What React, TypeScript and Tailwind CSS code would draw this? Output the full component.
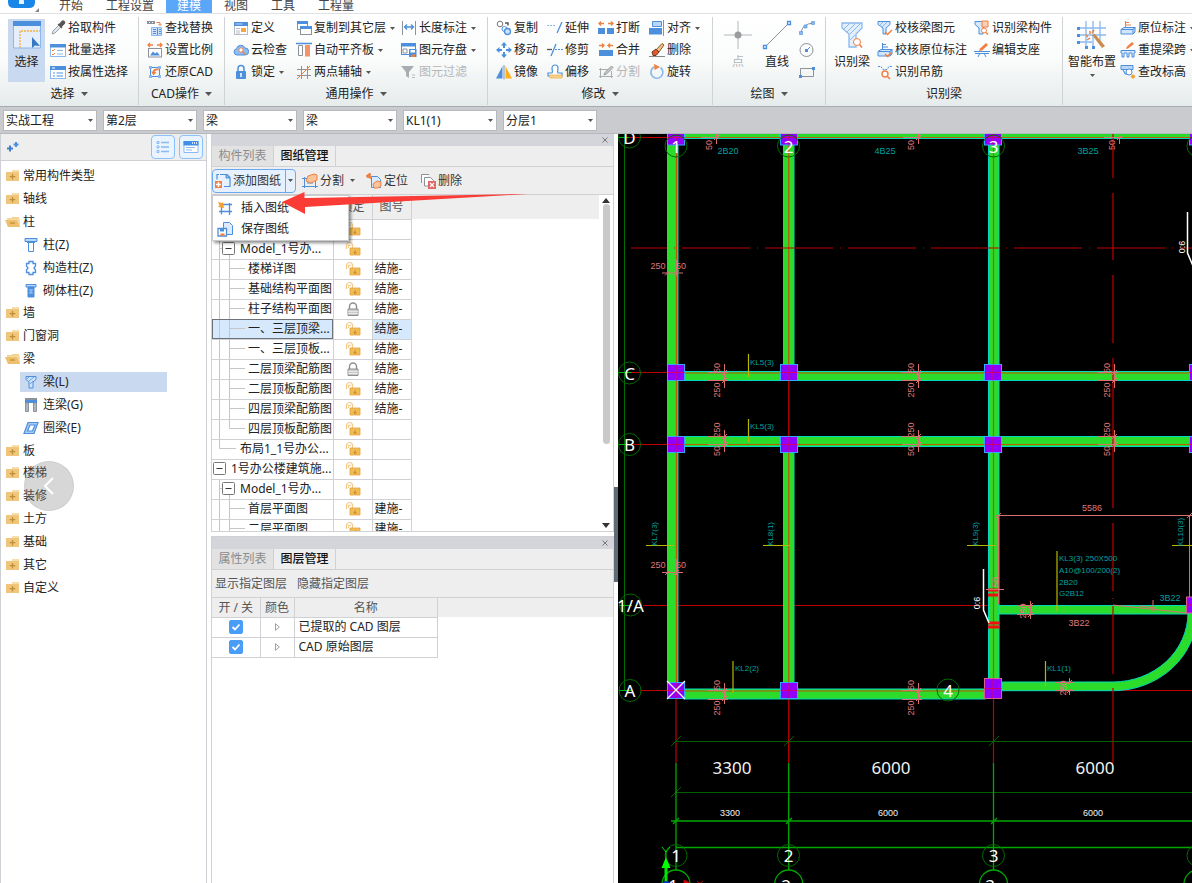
import React from "react";

const B = "#4b8fdd";
const L = "#8bb8ee";
const O = "#f08040";
const G = "#8b9299";

type IconProps = { name: string; className?: string };

const glyphs: Record<string, React.ReactNode> = {
  pick: (
    <>
      <path d="M2 14l1-3 6-6 2 2-6 6z" fill="#dfe6ec" stroke="#9aa3ab" strokeWidth="1" />
      <path d="M8 4l4 4M9 5l3-3.5a1.4 1.4 0 0 1 2.2 2L11 7z" fill="#555" stroke="#555" strokeWidth="1.2" />
    </>
  ),
  batch: (
    <>
      <rect x=".5" y="2.5" width="15" height="12" fill="#fff" stroke={L} />
      <path d="M0 2h16v3.5H0z" fill={B} />
      <path d="M2 8l1 1 2-2M2 12l1 1 2-2" fill="none" stroke={O} />
      <path d="M7 8.5h6M7 12h6" stroke={L} />
    </>
  ),
  attr: (
    <>
      <rect x=".5" y="2.5" width="15" height="12" fill="#fff" stroke={L} />
      <path d="M0 2h16v4H0z" fill={B} />
      <path d="M2 4h3" stroke="#fff" />
      <path d="M3 9h2M6.5 9H13M3 12h2M6.5 12H13" stroke={B} strokeWidth="1.2" />
    </>
  ),
  find: (
    <>
      <path d="M0 1h8v3H0z" fill={G} />
      <path d="M2 2.5h1M5 2.5h1" stroke="#fff" />
      <path d="M9.500 2.500H13V5M11.500 4L13 5.500 14.500 4" fill="none" stroke={O} />
      <path d="M4.500 7.500h10v8h-10z" fill="#cfe1f8" stroke={L} />
      <path d="M6 9.500h3M6 11.500h3M6 13.500h3M10.500 8v7M12 9.500h2M12 11.500h2M12 13.500h2" stroke={B} />
    </>
  ),
  scale: (
    <>
      <path d="M1 3h5M10 3h5M3 1L1 3l2 2M13 1l2 2-2 2" fill="none" stroke={O} strokeWidth="1.300" />
      <rect x="1.500" y="6.500" width="13" height="8.500" fill="#fff" stroke={G} />
      <path d="M3 13.500l3-4 2 2 2-1.500 3 3.500z" fill={B} />
    </>
  ),
  restore: (
    <>
      <path d="M3.500 2v12M12.500 2v12M2 3.500h12M2 12.500h12" stroke={B} fill="none" />
      <path d="M2 2h3v3H2zM11 2h3v3h-3zM2 11h3v3H2zM11 11h3v3h-3z" fill={L} />
      <path d="M6.500 9c0-3 2-4 5-3.500" stroke={O} strokeWidth="2" fill="none" />
      <path d="M4 7.500l2.500 4L9.500 8z" fill={O} />
    </>
  ),
  define: (
    <>
      <rect x="1.500" y="2.500" width="13" height="12" fill="#fff" stroke="#b5bcc4" />
      <path d="M1 2h14v4H1z" fill={B} />
      <path d="M2.500 4h7" stroke="#bcd6f5" />
      <path d="M8 8h5v4H8z" fill="#f5a742" />
      <path d="M3 8.500h4M3 11h4M3 13h4" stroke="#b5bcc4" />
    </>
  ),
  cloud: (
    <>
      <path d="M4 13a3.200 3.200 0 0 1-.5-6.300A4.500 4.500 0 0 1 12 6a3.500 3.500 0 0 1 .3 7z" fill="#8fbcf2" stroke={B} />
      <circle cx="8" cy="8" r="2.200" fill="#fff" stroke={O} />
      <path d="M9.500 9.500l2.500 2.500" stroke={O} strokeWidth="1.400" />
    </>
  ),
  lock: (
    <>
      <path d="M5 7V4.500a3 3 0 0 1 6 0V7" fill="none" stroke={B} strokeWidth="1.500" />
      <rect x="3" y="7" width="10" height="8" rx="1" fill={B} />
      <path d="M8 9v4" stroke="#fff" strokeWidth="1.500" />
    </>
  ),
  floors: (
    <>
      <rect x="1.500" y="1.500" width="10" height="8" fill="#fff" stroke={G} />
      <path d="M1 1h11v3H1z" fill={B} />
      <rect x="4.500" y="6.500" width="11" height="8" fill="#fff" stroke={G} />
      <path d="M4 6h12v3H4z" fill={B} />
    </>
  ),
  align: (
    <>
      <path d="M0 1.500h16" stroke={B} strokeWidth="1.500" />
      <path d="M2.500 3.500h4v10h-4z" fill="#fff" stroke={G} />
      <path d="M9 3h5v11.500H9z" fill="#f4936a" />
    </>
  ),
  aux: (
    <>
      <path d="M5.500 2v13M11.500 2v13M1 5.500h14M1 11.500h14" stroke={G} fill="none" />
      <path d="M1 15L14 2" stroke={O} />
    </>
  ),
  length: (
    <>
      <path d="M1.500 1v14M14.500 1v14" stroke={G} />
      <path d="M4 7h8M6 4.500L3.500 7 6 9.500M10 4.500L12.500 7 10 9.500" fill="none" stroke={B} strokeWidth="1.300" />
    </>
  ),
  store: (
    <>
      <rect x=".5" y="1.500" width="14" height="11" fill="#fff" stroke={B} />
      <path d="M0 1h15v3.500H0z" fill={B} />
      <path d="M2 7h4v4H2z" fill="none" stroke={G} />
      <path d="M8 7h7.500v8H8z" fill={B} />
      <path d="M9.500 8h4.500v2.500H9.500z" fill="#fff" />
      <path d="M10 12.500h4V15h-4z" fill={O} />
    </>
  ),
  filter: (
    <>
      <path d="M0 2h13L8 8v6l-3-2V8z" fill="#a9adb1" />
      <path d="M11 11h3M11 13.500h3" stroke="#b9bcc0" />
    </>
  ),
  copy: (
    <>
      <circle cx="4" cy="4" r="2.800" fill="#fff" stroke="#777" />
      <path d="M9 3h3v2.500" fill="none" stroke="#555" strokeWidth="1.500" />
      <circle cx="8.500" cy="9" r="2.500" fill="#fff" stroke={B} />
      <circle cx="11.500" cy="11.500" r="3" fill="#cfe3fa" stroke={B} strokeWidth="1.300" />
    </>
  ),
  move: (
    <path
      d="M8 0l3 3.500H9V6H7V3.500H5zM8 16l-3-3.500h2V10h2v2.500h2zM0 8l3.500-3v2H6v2H3.500v2zM16 8l-3.500 3V9H10V7h2.500V5z"
      fill={B}
    />
  ),
  mirror: (
    <>
      <path d="M6.500 2v12.500H0z" fill={B} />
      <path d="M9.500 2v12.500H16z" fill="#fbb11c" />
      <path d="M8 1v14.500" stroke={G} />
    </>
  ),
  extend: (
    <>
      <path d="M0 5.500h9" stroke={L} strokeDasharray="2 1" />
      <path d="M15 2L10 13" stroke={B} strokeWidth="1.300" />
    </>
  ),
  trim: (
    <>
      <path d="M0 7.500h5" stroke="#555" strokeWidth="1.300" />
      <path d="M9 2L4 14" stroke={B} strokeWidth="1.300" />
      <path d="M8 7.500h8" stroke={B} strokeDasharray="2 1" />
    </>
  ),
  offset: (
    <>
      <path d="M1 12V9h4C6 8 5 6 5 4a3 3 0 0 1 6 0c0 2-1 4 0 5h4v3z" fill="#fff" stroke={B} strokeWidth="1.200" />
      <path d="M3 14h11a1.500 1.500 0 0 0 0-3H2z" fill="#fbd28a" stroke="#e7ad49" strokeWidth=".7" />
    </>
  ),
  split: (
    <>
      <path d="M0 8h7v6H0zM9 8h7v6H9z" fill={B} />
      <path d="M1 3.500h5M10 3.500h5M3 1.500l-2 2 2 2M13 1.500l2 2-2 2" fill="none" stroke={O} strokeWidth="1.300" />
    </>
  ),
  merge: (
    <>
      <path d="M1 8h14v6H1z" fill={B} />
      <path d="M1 3.500h5M10 3.500h5M4 1.500l2 2-2 2M12 1.500l-2 2 2 2" fill="none" stroke={O} strokeWidth="1.300" />
    </>
  ),
  cut: (
    <>
      <path d="M1 5.500h10M1 12.500h14M2.500 4v10M13.500 7v7" stroke="#a9adb1" />
      <path d="M6 11l1-2.500L13.500 2l1.500 1.500L8.500 10z" fill="#c5c8cb" stroke="#999" />
    </>
  ),
  alignTo: (
    <>
      <path d="M3.500 1.500h9v5h-9z" fill="#b9d5f7" stroke={B} />
      <path d="M0 8h13v6.500H0z" fill={B} />
      <path d="M14.500 0v16" stroke={G} />
    </>
  ),
  erase: (
    <>
      <path d="M7 8L13 1.500l2 1.500-5 7z" fill="#f6c27c" stroke="#7e5a33" />
      <path d="M3 10l4-3 3 3-3 3.500H4z" fill="#e4572e" stroke="#6b3a22" />
      <path d="M0 14.500h16" stroke="#888" />
    </>
  ),
  rotate: (
    <>
      <path d="M11.500 3.500A6 6 0 1 1 5 3" fill="none" stroke={L} strokeWidth="1.600" />
      <path d="M5 0l6 3-5.500 3z" fill={O} />
    </>
  ),
  arc: (
    <>
      <path d="M2 13Q3 4 14 3" fill="none" stroke={G} />
      <path d="M.5 11.500h3v3h-3zM5 5h3v3H5zM12.500 1.500h3v3h-3z" fill={L} stroke={B} strokeWidth=".6" />
    </>
  ),
  circle: (
    <>
      <circle cx="7.500" cy="8" r="6.500" fill="none" stroke={G} />
      <path d="M6 7h3v3H6z" fill={B} />
      <path d="M8 8l3-3" stroke={B} />
    </>
  ),
  rect: (
    <>
      <path d="M1.500 4.500h13v8h-13z" fill="none" stroke={G} />
      <path d="M0 11h3v3H0zM13 3h3v3h-3z" fill={B} />
    </>
  ),
  beamCheck: (
    <>
      <path d="M1 1.500h12v3L9 8v6H6V8L1 4.500z" fill="#d8e8fb" stroke={B} />
      <path d="M3 5l3-3M5 7l5-5" stroke={L} />
      <path d="M8 12l2.500 2.500L15 10" fill="none" stroke={O} strokeWidth="1.500" />
    </>
  ),
  mark: (
    <>
      <path d="M5.500 8V1M5.500 2.500H9M5.500 5H11" fill="none" stroke={B} />
      <path d="M1 9.500l3-2h11l-2 2zM1 9.500h12V14H1zM13 9.500l2-2V12l-2 2" fill="#d3e5fb" stroke={B} />
      <path d="M8 12l2.500 2.500L15 10" fill="none" stroke={O} strokeWidth="1.500" />
    </>
  ),
  hang: (
    <>
      <path d="M1 2.500h3l2 3h4l2-3h3" fill="none" stroke={B} strokeDasharray="2 1" />
      <circle cx="8" cy="10" r="3" fill="#fff" stroke={O} strokeWidth="1.400" />
      <path d="M10 12l3 3" stroke={O} strokeWidth="1.600" />
    </>
  ),
  beamPart: (
    <>
      <path d="M1 1.500h12v3L9 8v6H5V8L1 4.500z" fill="#d8e8fb" stroke={B} />
      <path d="M8 1h6v6H8z" fill="#fbd0b5" stroke={O} />
      <circle cx="10" cy="10.500" r="2.500" fill="#fff" stroke={O} />
      <path d="M12 12.500l2 2" stroke={O} strokeWidth="1.400" />
    </>
  ),
  support: (
    <>
      <path d="M0 9.500h16M1 11.500h14" stroke={B} />
      <path d="M4 15l1.500-3M12 15l-1.500-3" stroke={B} />
      <path d="M5 9l1-2.500L12 1l2 2-6 5.500z" fill={O} />
    </>
  ),
  situ: (
    <>
      <path d="M5.500 8V1M5.500 2.500H9M5.500 5H11" fill="none" stroke={O} />
      <path d="M1 9.500l3-2h11l-2 2zM1 9.500h12V14H1zM13 9.500l2-2V12l-2 2" fill="#d3e5fb" stroke={B} />
    </>
  ),
  span: (
    <>
      <path d="M1 8.500h14V11h-1v4h-2v-4h-3v4H7v-4H4v4H2v-4H1z" fill="#d3e5fb" stroke={B} />
      <path d="M6 7l1-2.500L12 0l2 2-6 4.500z" fill={O} />
    </>
  ),
  level: (
    <>
      <path d="M1 1.500h12v4H1zM3 6l2 4h5" fill="#bcd6f6" stroke={B} />
      <circle cx="9" cy="8" r="3" fill="#fff" stroke={B} />
      <path d="M13 10l2.500 2.500L13 15l-2.500-2.500z" fill="#f5a030" />
    </>
  ),
  addSheet: (
    <>
      <path d="M4 1.500h-2v5M5 1.500h7l3 3V13.500H9" fill="none" stroke={B} strokeWidth="1.200" />
      <path d="M11 1v4h4z" fill="#8dbaf2" stroke={B} />
      <path d="M0 8h7v7H0z" fill={O} />
      <path d="M3.500 9v5M1 11.500h5" stroke="#fff" strokeWidth="1.400" />
    </>
  ),
  splitSheet: (
    <>
      <path d="M0 5.500h12M0 13.500h16M2.500 4v11M13.500 8v7M5 10h6" stroke={B} fill="none" />
      <path d="M6 3l6-2 3 1v5L9 10 4 8z" fill="#fbc39c" stroke={O} />
    </>
  ),
  locate: (
    <>
      <path d="M5.500 3.500h6l3 3v8h-9z" fill="#dceafc" stroke={B} />
      <path d="M4 0l.5 5.500L0 3zM1 5l4-4" fill={O} stroke={O} />
      <path d="M7 11l4-3 4 1v4l-3 2H8z" fill="#fbc39c" stroke={O} />
    </>
  ),
  removeSheet: (
    <>
      <path d="M1.500 10V1.500H9M4.500 13V4.500h6l3 3V13z" fill="#fff" stroke={G} />
      <path d="M8 8h8v8H8z" fill="#e06767" />
      <path d="M10 10l4 4M14 10l-4 4" stroke="#fff" strokeWidth="1.200" />
    </>
  ),
  insertSheet: (
    <>
      <path d="M4.500 4.500v10M12.500 3v12M2 11.500h13M6 4.500h9" stroke={B} fill="none" strokeWidth="1.300" />
      <path d="M1 2l4 1 1-1 1 6-6-1 1.500-1.500z" fill="#f5a030" />
    </>
  ),
  saveSheet: (
    <>
      <path d="M6.500 1.500h6l3 3v9h-9z" fill="#dceafc" stroke={B} />
      <path d="M1 7.500h8.500v7.500H1z" fill="#fff" stroke={B} strokeWidth="1.300" />
      <path d="M3 8h4v2.500H3z" fill={B} />
      <path d="M3.500 12.500h4V15h-4z" fill={O} />
    </>
  ),
  folder: (
    <>
      <path d="M7 2h7v3H7z" fill="#f6dda9" />
      <path d="M1 4h13v9H1z" fill="#f0c67c" />
      <path d="M7.500 6v5.500M4.700 8.700h5.600" stroke="#c08f35" strokeWidth="1.300" />
    </>
  ),
  folderOpen: (
    <>
      <path d="M7 3h7v2H7zM2 4h5v2H2z" fill="#f3d18f" />
      <path d="M2 5h13v7l-1 1H3z" fill="#f5dba6" />
      <path d="M0 6h12l3 7H3z" fill="#eebf6c" />
      <path d="M5 9h5" stroke="#c08f35" strokeWidth="1.300" />
    </>
  ),
  column: (
    <>
      <path d="M2 1.500h12v3H2z" fill="#b9d5f7" stroke={B} />
      <path d="M5.500 5.500h5v9h-5z" fill="#fff" stroke={B} />
      <path d="M4 5.500h8" stroke={B} />
    </>
  ),
  structColumn: (
    <path
      d="M6 1.500h4v2h2.500V6L11 8l1.500 2v2.500H10v2H6v-2H3.500V10L5 8 3.500 6V3.500H6z"
      fill="#fff"
      stroke={B}
      strokeWidth="1.300"
    />
  ),
  brickColumn: (
    <>
      <path d="M3 1.500h10v2.500H3z" fill="#b9d5f7" stroke={B} />
      <path d="M5 4h6v10H5z" fill={B} stroke={B} />
      <path d="M6 7h4M6 10h4M8 7v3" stroke="#a9ccf4" />
    </>
  ),
  beamSmall: (
    <>
      <path d="M3 2.500h10v3L10 8v6H6V8L3 5.500z" fill="#d0e3fb" stroke={B} />
      <path d="M4 5l3-3M6 7l5-4M7 10l3-3" stroke={B} strokeWidth=".8" />
    </>
  ),
  linkBeam: (
    <>
      <path d="M2 1h12v3H2z" fill={G} />
      <path d="M2 3h12v3H2z" fill={B} />
      <path d="M2.500 6h3v8.500h-3zM10.500 6h3v8.500h-3z" fill="#aeb7bf" stroke={G} />
    </>
  ),
  ringBeam: (
    <path d="M5 2.500h10l-4 11H1zM7 5l-2.500 6h5L12 5z" fillRule="evenodd" fill="#a9ccf6" stroke={B} strokeWidth="1.200" />
  ),
  unlocked: (
    <>
      <path d="M1.500 8V4.500a3 3 0 0 1 6 0V8M3.500 7V5a1 1 0 0 1 2 0" fill="none" stroke="#f2c98b" strokeWidth="1.200" />
      <path d="M5 7h10v7H5z" fill="#f2bb55" stroke="#e0a53f" strokeWidth=".8" />
      <path d="M10.500 9.500L9 12h2.500" stroke="#b47e1f" fill="none" />
    </>
  ),
  locked: (
    <>
      <path d="M4.500 8V5.500a3.500 3.500 0 0 1 7 0V8" fill="none" stroke="#8e8e8e" strokeWidth="1.400" />
      <path d="M3 8h10v6.500H3z" fill="#c6c6c6" stroke="#8e8e8e" />
      <path d="M3 10.300h10M3 12.400h10" stroke="#eee" />
    </>
  ),
};

function Icon({ name, className = "size-4" }: IconProps) {
  return (
    <svg viewBox="0 0 16 16" className={`shrink-0 ${className}`} aria-hidden="true">
      {glyphs[name]}
    </svg>
  );
}

function Caret({ className = "" }: { className?: string }) {
  return (
    <svg viewBox="0 0 5 3" className={`h-[3px] w-[5px] shrink-0 ${className}`} aria-hidden="true">
      <path d="M0 0h5L2.500 3z" fill="#555" />
    </svg>
  );
}

type Cmd = { icon: string; label: string; caret?: boolean; off?: boolean };

function CommandColumn({ items, className }: { items: Cmd[]; className?: string }) {
  return (
    <div className={`flex shrink-0 flex-col ${className ?? ""}`}>
      {items.map((c) => (
        <button
          key={c.label}
          disabled={c.off}
          className="flex h-[22px] items-center gap-0.5 whitespace-nowrap disabled:text-[#b4b6b8]"
        >
          <Icon name={c.icon} />
          <span>{c.label}</span>
          {c.caret && <Caret className="ml-0.5" />}
        </button>
      ))}
    </div>
  );
}

function Group({
  title,
  caret = true,
  className,
  children,
}: {
  title: string;
  caret?: boolean;
  className: string;
  children: React.ReactNode;
}) {
  return (
    <section className={`flex shrink-0 flex-col border-r border-[#cfd3d6] ${className}`}>
      <div className="flex h-[66px] pl-2">{children}</div>
      <button className="flex h-6 items-center justify-center gap-1.5">
        {title}
        {caret && (
          <svg viewBox="0 0 7 4" className="h-1 w-[7px]" aria-hidden="true">
            <path d="M0 0h7L3.500 4z" fill="#555" />
          </svg>
        )}
      </button>
    </section>
  );
}

function BigButton({
  label,
  className,
  caret,
  children,
}: {
  label: string;
  className?: string;
  caret?: boolean;
  children: React.ReactNode;
}) {
  return (
    <button className={`flex shrink-0 flex-col items-center whitespace-nowrap ${className ?? ""}`}>
      {children}
      <span className="leading-4">{label}</span>
      {caret && <Caret className="mt-1" />}
    </button>
  );
}

function Ribbon() {
  return (
    <div className="flex h-[93px] shrink-0 overflow-hidden border-b border-[#a9adb2] bg-linear-to-b from-white via-[#fafbfb] to-[#e6ebeb] pt-[3px] pb-px">
      <Group title="选择" className="w-[139px]">
        <BigButton label="选择" className="mt-0.5 h-[63px] w-[37px] bg-[#c9d9ef] pt-px">
          <svg viewBox="0 0 30 30" className="mb-1 size-[30px]" aria-hidden="true">
            <path d="M1.500 2h27v26h-27z" fill="#e5eefa" stroke={L} />
            <path d="M1 1h28v5H1z" fill={B} />
            <path d="M8 28V11h20" fill="none" stroke="#f0b040" strokeDasharray="2 1" strokeWidth="1.300" />
            <path d="M20 17v11l3-2.500 5 .5z" fill="#3579c6" />
          </svg>
        </BigButton>
        <CommandColumn
          className="ml-[5px]"
          items={[
            { icon: "pick", label: "拾取构件" },
            { icon: "batch", label: "批量选择" },
            { icon: "attr", label: "按属性选择" },
          ]}
        />
      </Group>
      <Group title="CAD操作" className="w-[86px]">
        <CommandColumn
          items={[
            { icon: "find", label: "查找替换" },
            { icon: "scale", label: "设置比例" },
            { icon: "restore", label: "还原CAD" },
          ]}
        />
      </Group>
      <Group title="通用操作" className="w-[263px]">
        <CommandColumn
          className="w-[63px]"
          items={[
            { icon: "define", label: "定义" },
            { icon: "cloud", label: "云检查" },
            { icon: "lock", label: "锁定", caret: true },
          ]}
        />
        <CommandColumn
          className="w-[105px]"
          items={[
            { icon: "floors", label: "复制到其它层", caret: true },
            { icon: "align", label: "自动平齐板", caret: true },
            { icon: "aux", label: "两点辅轴", caret: true },
          ]}
        />
        <CommandColumn
          items={[
            { icon: "length", label: "长度标注", caret: true },
            { icon: "store", label: "图元存盘", caret: true },
            { icon: "filter", label: "图元过滤", off: true },
          ]}
        />
      </Group>
      <Group title="修改" className="w-[225px]">
        <CommandColumn
          className="w-[51px]"
          items={[
            { icon: "copy", label: "复制" },
            { icon: "move", label: "移动" },
            { icon: "mirror", label: "镜像" },
          ]}
        />
        <CommandColumn
          className="w-[51px]"
          items={[
            { icon: "extend", label: "延伸" },
            { icon: "trim", label: "修剪" },
            { icon: "offset", label: "偏移" },
          ]}
        />
        <CommandColumn
          className="w-[51px]"
          items={[
            { icon: "split", label: "打断" },
            { icon: "merge", label: "合并" },
            { icon: "cut", label: "分割", off: true },
          ]}
        />
        <CommandColumn
          items={[
            { icon: "alignTo", label: "对齐", caret: true },
            { icon: "erase", label: "删除" },
            { icon: "rotate", label: "旋转" },
          ]}
        />
      </Group>
      <Group title="绘图" className="w-[113px]">
        <BigButton label="点" className="w-[34px] pt-[3px] text-[#b4b6b8]">
          <svg viewBox="0 0 30 30" className="mb-1 size-[30px]" aria-hidden="true">
            <path d="M15 1v28M1 15h28" stroke="#b4b6b8" />
            <circle cx="15" cy="15" r="3.500" fill="#9a9c9e" />
          </svg>
        </BigButton>
        <BigButton label="直线" className="ml-1 w-9 pt-[3px]">
          <svg viewBox="0 0 30 30" className="mb-1 size-[30px]" aria-hidden="true">
            <path d="M3 27L27 3" stroke={G} />
            <path d="M1.500 25.500h3v3h-3zM25.500 1.500h3v3h-3z" fill="#fff" stroke={B} strokeWidth="1.300" />
          </svg>
        </BigButton>
        <div className="ml-1 flex flex-col">
          {[
            ["arc", "弧线"],
            ["circle", "圆"],
            ["rect", "矩形"],
          ].map(([icon, label]) => (
            <button key={icon} aria-label={label} className="flex h-[22px] items-center">
              <Icon name={icon} />
            </button>
          ))}
        </div>
      </Group>
      <Group title="识别梁" caret={false} className="w-[237px]">
        <BigButton label="识别梁" className="w-9 pt-[3px]">
          <svg viewBox="0 0 30 30" className="mb-1 size-[30px]" aria-hidden="true">
            <path d="M5 3h20v5l-6 6v13h-7V14L5 8z" fill="#e4effc" stroke={L} strokeWidth="1.300" />
            <path d="M7 9l5-5M10 12l8-8M13 14l10-10M13 20l5-5" stroke={L} />
            <circle cx="20" cy="22" r="3.500" fill="#fff" stroke={O} />
            <path d="M22.500 24.500l2.500 3" stroke={O} strokeWidth="1.500" />
          </svg>
        </BigButton>
        <CommandColumn
          className="ml-[7px] w-[97px]"
          items={[
            { icon: "beamCheck", label: "校核梁图元" },
            { icon: "mark", label: "校核原位标注" },
            { icon: "hang", label: "识别吊筋" },
          ]}
        />
        <CommandColumn
          items={[
            { icon: "beamPart", label: "识别梁构件" },
            { icon: "support", label: "编辑支座" },
          ]}
        />
      </Group>
      <div className="flex h-[66px] shrink-0">
        <BigButton label="智能布置" caret className="ml-1 w-[50px] pt-[3px]">
          <svg viewBox="0 0 30 30" className="mb-1 size-[30px]" aria-hidden="true">
            <path d="M9 1v27M16 1v27M23 1v20M1 8h28M1 15h28M1 22h14" stroke={L} strokeWidth="1.300" />
            <path d="M0 7h3v3H0zM0 14h3v3H0zM0 21h3v3H0zM8 26h3v3H8zM15 26h3v3h-3z" fill={B} />
            <path d="M15 15l3-1 10 12-3 2z" fill="#c98d52" />
            <path d="M9 15l2 2M13 11v3M17 10l-2 3M10 20l3-2" stroke={O} strokeWidth="1.500" />
          </svg>
        </BigButton>
        <CommandColumn
          className="ml-[3px]"
          items={[
            { icon: "situ", label: "原位标注", caret: true },
            { icon: "span", label: "重提梁跨", caret: true },
            { icon: "level", label: "查改标高" },
          ]}
        />
      </div>
    </div>
  );
}

const combos: [string, string][] = [
  ["工程", "实战工程"],
  ["楼层", "第2层"],
  ["类型", "梁"],
  ["构件类型", "梁"],
  ["构件", "KL1(1)"],
  ["分层", "分层1"],
];

function ComboBar() {
  return (
    <div className="flex h-[27px] shrink-0 gap-[6px] border-b border-[#b5b8bc] bg-[#c9cbcf] pt-[3px] pl-[3px]">
      {combos.map(([label, value]) => (
        <label key={label} className="relative block h-[21px] w-[94px] shrink-0">
          <select
            aria-label={label}
            className="h-full w-full appearance-none border border-[#b7babd] bg-white pl-0.5 text-[12px] leading-4 outline-none"
          >
            <option>{value}</option>
          </select>
          <Caret className="pointer-events-none absolute top-[9px] right-[4px]" />
        </label>
      ))}
    </div>
  );
}

type Node = { icon: string; label: string; child?: boolean; active?: boolean };
const nodes: Node[] = [
  { icon: "folder", label: "常用构件类型" },
  { icon: "folder", label: "轴线" },
  { icon: "folderOpen", label: "柱" },
  { icon: "column", label: "柱(Z)", child: true },
  { icon: "structColumn", label: "构造柱(Z)", child: true },
  { icon: "brickColumn", label: "砌体柱(Z)", child: true },
  { icon: "folder", label: "墙" },
  { icon: "folder", label: "门窗洞" },
  { icon: "folderOpen", label: "梁" },
  { icon: "beamSmall", label: "梁(L)", child: true, active: true },
  { icon: "linkBeam", label: "连梁(G)", child: true },
  { icon: "ringBeam", label: "圈梁(E)", child: true },
  { icon: "folder", label: "板" },
  { icon: "folder", label: "楼梯" },
  { icon: "folder", label: "装修" },
  { icon: "folder", label: "土方" },
  { icon: "folder", label: "基础" },
  { icon: "folder", label: "其它" },
  { icon: "folder", label: "自定义" },
];

function ComponentTree() {
  return (
    <aside className="relative flex w-[207px] shrink-0 flex-col border-x border-[#cdd0d4] bg-white">
      <div className="flex h-[27px] shrink-0 items-center gap-1 border-b border-[#cfd1d4] bg-[#eeeeef] pr-[3px] pl-[5px]">
        <button aria-label="添加" className="mr-auto">
          <svg viewBox="0 0 14 14" className="size-[14px]" aria-hidden="true">
            <path d="M4 5.500v6M1 8.500h6" stroke="#3f7fd0" strokeWidth="2" />
            <path d="M10 2v5M7.500 4.500h5" stroke={B} strokeWidth="2" />
          </svg>
        </button>
        <button aria-label="列表" className="flex size-6 items-center justify-center rounded-sm border border-[#8cc0fa] bg-[#e9f4ff]">
          <svg viewBox="0 0 14 14" className="size-[14px]" aria-hidden="true">
            <path d="M1 1.500h2v2H1zM1 6h2v2H1zM1 10.500h2v2H1z" fill="none" stroke={L} />
            <path d="M5 2.500h8M5 7h8M5 11.500h8" stroke={L} strokeWidth="1.300" />
          </svg>
        </button>
        <button aria-label="窗口" className="flex size-6 items-center justify-center rounded-sm border border-[#8cc0fa] bg-[#e9f4ff]">
          <svg viewBox="0 0 16 14" className="h-[14px] w-4" aria-hidden="true">
            <path d="M1 1.500h14v11H1z" fill="#fff" stroke={L} />
            <path d="M.5 1h15v4.500H.5z" fill="#3f8fe8" />
            <path d="M9 3h1M11 3h1M13 3h1" stroke="#fff" strokeWidth="1.500" />
            <path d="M3 7.500h9M3 10h6" stroke={L} />
          </svg>
        </button>
      </div>
      <ul className="mt-1 grid h-[434px] auto-rows-fr">
        {nodes.map((n) => (
          <li key={n.label} className={`flex items-center ${n.child ? "pr-[39px] pl-[19px]" : "pl-1"}`}>
            <button
              className={`flex h-5 w-full items-center text-left ${n.child ? "gap-1 pl-[3px]" : "gap-[2px]"} ${
                n.active ? "bg-[#c9d9ef]" : ""
              }`}
            >
              <Icon name={n.icon} />
              {n.label}
            </button>
          </li>
        ))}
      </ul>
      <button
        aria-label="上一张"
        className="absolute top-[327px] left-[23px] flex size-[50px] items-center justify-center rounded-full border border-black/5 bg-[#8c8c8c]/35"
      >
        <svg viewBox="0 0 12 20" className="h-[20px] w-3" aria-hidden="true">
          <path d="M10 2L2 10l8 8" fill="none" stroke="#fff" strokeWidth="2" />
        </svg>
      </button>
    </aside>
  );
}

function PanelHead({ tabs }: { tabs: [string, string] }) {
  return (
    <>
      <div className="flex h-3 shrink-0 items-center justify-end bg-[#d3d5da] pr-[5px]">
        <button aria-label="关闭">
          <svg viewBox="0 0 6 6" className="size-[6px]" aria-hidden="true">
            <path d="M.5.500l5 5M5.500.500l-5 5" stroke="#777" />
          </svg>
        </button>
      </div>
      <div role="tablist" className="flex h-[21px] shrink-0 border-b border-[#cfd1d4] bg-[#eeeeef]">
        <button role="tab" aria-selected="false" className="w-[62px] border-r border-[#cfd1d4] bg-[#e2e2e3] text-[#8b8b8b]">
          {tabs[0]}
        </button>
        <button role="tab" aria-selected="true" className="w-[62px] border-r border-[#cfd1d4] font-medium text-[#111]">
          {tabs[1]}
        </button>
      </div>
    </>
  );
}

type Sheet = { name: string; kind: "root" | "model" | "leaf" | "lastLeaf" | "layout"; locked?: boolean; no?: string; active?: boolean };
const sheets: Sheet[] = [
  { name: "Model_1号办...", kind: "model" },
  { name: "楼梯详图", kind: "leaf", no: "结施-" },
  { name: "基础结构平面图", kind: "leaf", no: "结施-" },
  { name: "柱子结构平面图", kind: "leaf", no: "结施-", locked: true },
  { name: "一、三层顶梁...", kind: "leaf", no: "结施-", active: true },
  { name: "一、三层顶板...", kind: "leaf", no: "结施-" },
  { name: "二层顶梁配筋图", kind: "leaf", no: "结施-", locked: true },
  { name: "二层顶板配筋图", kind: "leaf", no: "结施-" },
  { name: "四层顶梁配筋图", kind: "leaf", no: "结施-" },
  { name: "四层顶板配筋图", kind: "lastLeaf" },
  { name: "布局1_1号办公...", kind: "layout" },
  { name: "1号办公楼建筑施...", kind: "root" },
  { name: "Model_1号办...", kind: "model" },
  { name: "首层平面图", kind: "leaf", no: "建施-" },
  { name: "二层平面图", kind: "leaf", no: "建施-" },
];

function Guides({ kind }: { kind: Sheet["kind"] }) {
  const line = { stroke: "#c4c7ca", fill: "none" };
  if (kind === "root")
    return (
      <svg viewBox="0 0 19 20" className="h-5 w-[19px] shrink-0" aria-hidden="true">
        <rect x="1.500" y="3.500" width="12" height="12" rx="1" fill="#fff" stroke="#777" />
        <path d="M4.500 9.500h6" stroke="#333" />
      </svg>
    );
  if (kind === "model")
    return (
      <svg viewBox="0 0 28 20" className="h-5 w-7 shrink-0" aria-hidden="true">
        <path d="M7.500 0v20M7.500 9.500h4M17.500 16v4" {...line} />
        <rect x="10.500" y="3.500" width="12" height="12" rx="1" fill="#fff" stroke="#777" />
        <path d="M13.500 9.500h6" stroke="#333" />
      </svg>
    );
  if (kind === "layout")
    return (
      <svg viewBox="0 0 28 20" className="h-5 w-7 shrink-0" aria-hidden="true">
        <path d="M7.500 0v9.500H24" {...line} />
      </svg>
    );
  return (
    <svg viewBox="0 0 36 20" className="h-5 w-9 shrink-0" aria-hidden="true">
      <path d={kind === "leaf" ? "M7.500 0v20M17.500 0v20M17.500 9.500H33" : "M7.500 0v20M17.500 0v9.500H33"} {...line} />
    </svg>
  );
}

function SheetPanel() {
  return (
    <section className="relative flex min-h-0 flex-[398] basis-0 flex-col border border-t-0 border-[#cfd1d4] bg-white">
      <PanelHead tabs={["构件列表", "图纸管理"]} />
      <div className="relative flex h-7 shrink-0 items-center border-b border-[#cfd1d4] bg-[#eeeeef] text-[#333]">
        <div className="flex h-6 items-center rounded-sm border border-[#6aa9f0] bg-[#e6f1fd]">
          <button className="flex h-full w-[72px] items-center gap-0.5 pl-0.5">
            <Icon name="addSheet" />
            添加图纸
          </button>
          <button aria-label="展开" className="flex h-full w-[10px] items-center justify-center border-l border-[#6aa9f0]">
            <Caret />
          </button>
        </div>
        <button className="ml-[6px] flex items-center gap-0.5">
          <Icon name="splitSheet" />
          分割
          <Caret className="ml-1" />
        </button>
        <button className="ml-[11px] flex items-center gap-0.5">
          <Icon name="locate" />
          定位
        </button>
        <button className="ml-3 flex items-center gap-0.5">
          <Icon name="removeSheet" />
          删除
        </button>
        <div className="absolute top-7 left-0 z-10 flex h-[46px] w-[137px] flex-col border border-[#c9cbcd] bg-white py-px text-[#222] shadow-[2px_2px_3px_rgba(0,0,0,0.45)]">
          <button className="flex h-[22px] items-center gap-2 pl-1">
            <Icon name="insertSheet" />
            插入图纸
          </button>
          <button className="flex h-[22px] items-center gap-2 pl-1">
            <Icon name="saveSheet" />
            保存图纸
          </button>
        </div>
        <svg viewBox="0 0 250 28" className="absolute top-[24px] left-[68px] z-20 h-7 w-[250px]" aria-hidden="true">
          <path d="M2 11L24.500 1v6L248 3 25 16v7z" fill="#fb3b36" />
        </svg>
      </div>
      <div className="flex min-h-0 flex-1">
        <div className="min-w-0 flex-1 overflow-hidden bg-linear-to-b from-[#eeeeef] from-[24px] to-white to-[24px]">
          <table className="w-[199px] table-fixed border-collapse text-left">
            <colgroup>
              <col className="w-[121px]" />
              <col className="w-[39px]" />
              <col className="w-[39px]" />
            </colgroup>
            <thead className="bg-[#eeeeef] text-[#555]">
              <tr className="h-6">
                <th className="border-r border-b border-[#cfd1d4] p-0" />
                <th className="border-r border-b border-[#cfd1d4] p-0 text-center font-normal">锁定</th>
                <th className="border-r border-b border-[#cfd1d4] p-0 text-center font-normal">图号</th>
              </tr>
            </thead>
            <tbody>
              <tr className="h-5">
                <td className="border border-l-0 border-[#cfd1d4] p-0" />
                <td className="border border-[#cfd1d4] p-0">
                  <Icon name="unlocked" className="mx-auto size-4" />
                </td>
                <td className="border border-[#cfd1d4] p-0" />
              </tr>
              {sheets.map((s, i) => (
                <tr key={i} className={`h-5 ${s.active ? "bg-[#d6e8fc]" : "bg-white"}`}>
                  <td className={`border border-l-0 border-[#cfd1d4] p-0 ${s.active ? "outline outline-1 -outline-offset-1 outline-[#6d7278]" : ""}`}>
                    <div className="flex h-[19px] items-center overflow-hidden whitespace-nowrap">
                      <Guides kind={s.kind} />
                      {s.name}
                    </div>
                  </td>
                  <td className="border border-[#cfd1d4] bg-white p-0">
                    <Icon name={s.locked ? "locked" : "unlocked"} className="mx-auto size-4" />
                  </td>
                  <td className="border border-[#cfd1d4] p-0 pl-0.5 leading-[18px]">{s.no}</td>
                </tr>
              ))}
            </tbody>
          </table>
        </div>
        <div className="flex w-[14px] shrink-0 flex-col items-center py-[3px]">
          <svg viewBox="0 0 8 5" className="h-[5px] w-2" aria-hidden="true">
            <path d="M0 5h8L4 0z" fill="#333" />
          </svg>
          <div className="mt-px h-[240px] w-[7px] rounded-full bg-[#c9c9c9]" />
          <svg viewBox="0 0 8 5" className="mt-auto h-[5px] w-2" aria-hidden="true">
            <path d="M0 0h8L4 5z" fill="#333" />
          </svg>
        </div>
      </div>
    </section>
  );
}

function LayerPanel() {
  return (
    <section className="flex min-h-0 flex-[346] basis-0 flex-col border border-b-0 border-[#cfd1d4] bg-white">
      <PanelHead tabs={["属性列表", "图层管理"]} />
      <div className="flex h-7 shrink-0 items-center gap-[10px] border-b border-[#cfd1d4] bg-[#eeeeef] pl-[3px] text-[#555]">
        <button>显示指定图层</button>
        <button>隐藏指定图层</button>
      </div>
      <div className="bg-linear-to-b from-[#eeeeef] from-[19px] to-white to-[19px]">
        <table className="w-[226px] table-fixed border-collapse text-left">
          <colgroup>
            <col className="w-[48px]" />
            <col className="w-[34px]" />
            <col />
          </colgroup>
          <thead className="bg-[#eeeeef] text-[#555]">
            <tr className="h-[19px]">
              <th className="border-r border-b border-[#cfd1d4] p-0 text-center leading-[18px] font-normal">开 / 关</th>
              <th className="border-r border-b border-[#cfd1d4] p-0 text-center leading-[18px] font-normal">颜色</th>
              <th className="border-r border-b border-[#cfd1d4] p-0 text-center leading-[18px] font-normal">名称</th>
            </tr>
          </thead>
          <tbody className="bg-white">
            {["已提取的 CAD 图层", "CAD 原始图层"].map((name) => (
              <tr key={name} className="h-5">
                <td className="border border-l-0 border-[#cfd1d4] p-0">
                  <label className="mx-auto grid size-[14px] place-items-center">
                    <input
                      type="checkbox"
                      defaultChecked
                      aria-label={name}
                      className="peer col-start-1 row-start-1 size-[14px] appearance-none rounded-xs border border-[#4a9df6] bg-white checked:bg-[#4a9df6]"
                    />
                    <svg
                      viewBox="0 0 10 8"
                      className="pointer-events-none invisible col-start-1 row-start-1 h-2 w-[10px] peer-checked:visible"
                      aria-hidden="true"
                    >
                      <path d="M1.500 4l2.500 2.500L8.500 1.500" fill="none" stroke="#fff" strokeWidth="1.800" />
                    </svg>
                  </label>
                </td>
                <td className="border border-[#cfd1d4] p-0">
                  <button aria-label="展开颜色" className="mx-auto block">
                    <svg viewBox="0 0 5 8" className="h-2 w-[5px]" aria-hidden="true">
                      <path d="M.5.700L4.300 4 .5 7.300z" fill="#fff" stroke="#888" strokeWidth=".8" />
                    </svg>
                  </button>
                </td>
                <td className="border border-[#cfd1d4] p-0 pl-1 leading-[18px]">{name}</td>
              </tr>
            ))}
          </tbody>
        </table>
      </div>
    </section>
  );
}

type TP = { x: number; y: number; c?: string; s?: number; r?: boolean; a?: "start" | "middle"; wide?: boolean; children: React.ReactNode };
function T({ x, y, c = "#e07878", s = 9, r, a = "middle", wide, children }: TP) {
  return (
    <text
      x={x}
      y={y}
      fill={c}
      fontSize={s}
      textAnchor={a}
      dominantBaseline="central"
      transform={r ? `rotate(-90 ${x} ${y})` : undefined}
      className={wide ? "font-['Noto_Sans',sans-serif]" : "font-['Liberation_Sans_Narrow','Liberation_Sans',sans-serif]"}
    >
      {children}
    </text>
  );
}

const GREEN = "#2bdc2b";
const CYAN = "#00d9bd";
const TEAL = "#00a0a0";
const PINK = "#d87070";
const RED = "#c00000";

function Beam({ x, y, w, h }: { x: number; y: number; w: number; h: number }) {
  return <rect x={x} y={y} width={w} height={h} fill={GREEN} stroke={CYAN} />;
}

function Column({ x, y, h = 16, edge = "#33a8ff" }: { x: number; y: number; h?: number; edge?: string }) {
  return (
    <>
      <rect x={x} y={y} width="17" height={h} fill="#9100ff" stroke={edge} />
      <path d={`M${x} ${y + h / 2}h17M${x + 8.500} ${y}v${h}`} stroke="#e00040" strokeWidth=".8" />
    </>
  );
}

function Bubble({ x, y, label, c = "#006b00" }: { x: number; y: number; label: string; c?: string }) {
  return (
    <>
      <circle cx={x} cy={y} r="11" fill="none" stroke={c} />
      <T x={x} y={y} c="#fff" s={17} wide>
        {label}
      </T>
    </>
  );
}

function Drawing() {
  return (
    <svg
      viewBox="618 134 574 749"
      preserveAspectRatio="xMinYMin slice"
      className="block h-full w-full bg-black"
      role="img"
      aria-label="梁平面图"
    >
      <g stroke={RED} strokeWidth="1.200" fill="none">
        <path d="M619 137.500H668M630 372.500H668M630 444.500H668M643 605.500H999M641 690.500H1192" />
        <path d="M788.700 380V436M676 699V763M788.700 699V763M993.500 699V763" />
      </g>

      <Beam x={667.500} y={134} w={10.500} h={560} />
      <Beam x={783.500} y={134} w={10.500} h={238} />
      <Beam x={783.500} y={444} w={10.500} h={246} />
      <Beam x={988.500} y={134} w={10.500} h={556} />
      <Beam x={684} y={130} w={520} h={8.500} />
      <Beam x={684} y={371.500} w={520} h={9} />
      <Beam x={684} y={436.500} w={520} h={10} />
      <Beam x={684} y={689} w={301} h={10} />
      <Beam x={999.500} y={605.500} w={190} h={8.500} />
      <path d="M1002 682H1113A75 69 0 0 0 1188 613H1197A84 78 0 0 1 1113 690.700H1002z" fill={GREEN} stroke={CYAN} />

      <g stroke="#d84000" strokeWidth="1.200" opacity=".85">
        <path d="M676.500 134V690M788.700 134V372M788.700 444V690M993.500 134V690" />
        <path d="M684 137.500H1192M684 373H1192M684 444.500H1192M684 691H985" />
      </g>
      <g stroke={RED} strokeWidth="1.200" fill="none">
        <path d="M631 248H1192" strokeDasharray="68 7 1 7" strokeDashoffset="32" />
        <path d="M1113 134V178M1113 193V260M1113 275V343M1113 358V508M1113 523V591M1113 598v1M1113 606V674M1113 688V763" />
      </g>
      <path d="M988 590h11M988 595h11M988 623h11M988 627h11" stroke="#f01010" strokeWidth="3" />

      <Column x={667.500} y={130} h={15} />
      <Column x={780.500} y={130} h={15} />
      <Column x={984.500} y={130} h={15} />
      <Column x={1189.500} y={130} h={15} />
      {[364.500, 436.500].map((y) => (
        <g key={y}>
          <Column x={667.500} y={y} />
          <Column x={780.500} y={y} />
          <Column x={984.500} y={y} />
          <Column x={1189.500} y={y} />
        </g>
      ))}
      <Column x={667.500} y={682.500} />
      <Column x={780.500} y={682.500} />
      <Column x={984.500} y={678.500} h={20} edge="#d86090" />
      <Column x={1186.500} y={597} edge="#d86090" />
      <path d="M667 681l18 18M685 681l-18 18" stroke="#fff" strokeWidth="1.200" />

      <path d="M624.500 134V690" stroke="#006b00" />
      <path d="M619 137.500h10M619 372.500h13M619 444.500h13M619 605.500h13M619 690.500h13" stroke="#00b400" />
      <Bubble x={629.500} y={137} label="D" />
      <Bubble x={629.500} y={373} label="C" />
      <Bubble x={629.500} y={444.500} label="B" />
      <Bubble x={630.500} y={605} label="1/A" />
      <Bubble x={630} y={690.500} label="A" />
      <Bubble x={676} y={146} label="1" />
      <Bubble x={788.500} y={146} label="2" />
      <Bubble x={993.500} y={146} label="3" />
      <circle cx="1198" cy="146" r="11" fill="none" stroke="#006b00" />
      <Bubble x={948} y={690} label="4" />

      <g stroke="#005f00" fill="none">
        <path d="M676 741.500H1192M676 792.500H1192" />
        <path d="M671 746l10-10M784 746l10-10M989 746l10-10M671 797l10-10" />
      </g>
      <g stroke="#00a800" fill="none" strokeWidth="1.300">
        <path d="M671 821H1192M676 847.500H1192M676 763V870M788.700 763V870M993.500 763V870" />
        <path d="M673 824l6-6M786 824l6-6M991 824l6-6" />
        <circle cx="676" cy="884" r="14" />
        <circle cx="788.700" cy="884" r="14" />
        <circle cx="993.500" cy="884" r="14" />
        <circle cx="1198" cy="884" r="14" />
      </g>
      <Bubble x={676} y={855.500} label="1" />
      <Bubble x={788.500} y={855.500} label="2" />
      <Bubble x={993.500} y={855.500} label="3" />
      <circle cx="1198" cy="855.500" r="11" fill="none" stroke="#006b00" />
      <T x={673} y={885} c="#fff" s={17} wide>1</T>
      <T x={786} y={885} c="#fff" s={17} wide>2</T>
      <T x={990} y={885} c="#fff" s={17} wide>3</T>

      <T x={732} y={767} c="#f2f2f2" s={17} wide>3300</T>
      <T x={891} y={767} c="#f2f2f2" s={17} wide>6000</T>
      <T x={1095} y={767} c="#f2f2f2" s={17} wide>6000</T>
      <T x={730} y={813} c="#f2f2f2">3300</T>
      <T x={888} y={813} c="#f2f2f2">6000</T>
      <T x={1093} y={813} c="#f2f2f2">6000</T>

      <path d="M666 862V883" stroke="#00e800" strokeWidth="3" />
      <path d="M666 857l-4.500 11h9z" fill="#00ff00" />
      <path d="M662 847l4 5 4-5M666 852v6" stroke="#00e000" fill="none" />
      <circle cx="666" cy="885" r="4" fill="#1030c0" />
      <path d="M684 880l6 3-6 3zM697 881l6 5M703 881l-6 5" fill="#e00000" stroke="#c00000" />

      {[265.500, 565].map((y) => (
        <g key={y}>
          <T x={658} y={y}>250</T>
          <T x={681} y={y}>50</T>
          <path d={`M662 ${y + 7.500}h21M667.500 ${y - 6}v16M676.500 ${y - 6}v16M665 ${y + 10}l5-5M674 ${y + 10}l5-5`} stroke={PINK} />
        </g>
      ))}
      {[717, 911, 1107].map((x) => (
        <g key={x}>
          <T x={x} y={368} r>50</T>
          <T x={x} y={390} r>250</T>
          <path d={`M${x + 7.500} 364v24M${x - 9} 372.500h20M${x - 9} 380.500h20M${x + 5} 375l5-5M${x + 5} 383l5-5`} stroke={PINK} />
          <T x={x} y={430} r>250</T>
          <T x={x} y={451} r>50</T>
          <path d={`M${x + 7.500} 430v22M${x - 9} 436.500h20M${x - 9} 444.500h20M${x + 5} 439l5-5M${x + 5} 447l5-5`} stroke={PINK} />
        </g>
      ))}
      {[717, 911].map((x) => (
        <g key={x}>
          <T x={x} y={685} r>50</T>
          <T x={x} y={708} r>250</T>
          <path d={`M${x + 7.500} 683v21M${x - 9} 690.500h20M${x - 9} 699.500h20M${x + 5} 693l5-5M${x + 5} 701l5-5`} stroke={PINK} />
        </g>
      ))}
      {[709, 911, 1112].map((x) => (
        <g key={x}>
          <T x={x} y={145} r>50</T>
          <path d={`M${x - 8} 137.500h18M${x + 7.500} 134v10M${x + 5} 140l5-5`} stroke={PINK} />
        </g>
      ))}
      <T x={1023} y={611} r>250</T>
      <T x={1063} y={688} r>250</T>
      <path d="M1017 605.500h17M1017 614.500h17M1030.500 601v18M1028 608l5-5M1028 617l5-5M1056 682.500h17M1056 690.500h17M1069.500 678v17M1067 685l5-5M1067 693l5-5" stroke={PINK} />
      <T x={995} y={582} r>50</T>
      <path d="M998.500 516V604M1189.500 515V597M996 515.500H1192M996 518l5-5M1187 518l5-5M986 589.500h18" stroke={PINK} fill="none" />
      <path d="M1113 605l74 8M1153 600v12M1140 606l15 2" stroke={PINK} fill="none" />
      <T x={1092} y={508}>5586</T>
      <T x={1079} y={623}>3B22</T>

      <g stroke="#b8b800" strokeWidth="1.200">
        <path d="M748.500 354v23M748.500 419v23M733 661v32M1045.500 661v25M1057 551v60" />
        <path d="M646 545.500h28M763 545.500h27M967 545.500h28M1172 545.500h20" />
      </g>
      <T x={728} y={151} c={TEAL}>2B20</T>
      <T x={885} y={151} c={TEAL}>4B25</T>
      <T x={1088} y={151} c={TEAL}>3B25</T>
      <T x={750} y={362} c={TEAL} s={8} a="start">KL5(3)</T>
      <T x={750} y={426} c={TEAL} s={8} a="start">KL5(3)</T>
      <T x={735} y={668} c={TEAL} s={8} a="start">KL2(2)</T>
      <T x={1047} y={668} c={TEAL} s={8} a="start">KL1(1)</T>
      <T x={654} y={534} c={TEAL} s={8} r>KL7(3)</T>
      <T x={770} y={534} c={TEAL} s={8} r>KL8(1)</T>
      <T x={975} y={534} c={TEAL} s={8} r>KL9(3)</T>
      <T x={1180} y={532} c={TEAL} s={8} r>KL10(3)</T>
      <T x={1059} y={558} c={TEAL} s={8} a="start">KL3(3) 250X500</T>
      <T x={1059} y={570} c={TEAL} s={8} a="start">A10@100/200(2)</T>
      <T x={1059} y={582} c={TEAL} s={8} a="start">2B20</T>
      <T x={1059} y={593} c={TEAL} s={8} a="start">G2B12</T>
      <T x={1170} y={598} c={TEAL}>3B22</T>

      <path d="M1187.500 212V253L1193 266M983.500 569V610L989 623" stroke="#fff" strokeWidth="1.500" fill="none" />
      <T x={1182} y={247} c="#fff" r>0:6</T>
      <T x={977} y={603} c="#fff" r>0:6</T>
    </svg>
  );
}

const menu = ["开始", "工程设置", "建模", "视图", "工具", "工程量"];

export default function App() {
  return (
    <div className="flex h-screen flex-col overflow-hidden bg-white font-['Noto_Sans','Noto_Sans_CJK_SC',sans-serif] text-[12px] leading-4 text-[#222]">
      <header className="flex h-[14px] shrink-0 border-b border-[#dfe1e3]">
        <svg viewBox="0 0 40 13" className="mr-2 h-[13px] w-10 shrink-0" aria-hidden="true">
          <path d="M8 0h27v2q0 6-6 6H14Q8 8 8 2z" fill="#1a86e8" />
          <path d="M19 4V1.500a2.500 2.500 0 0 1 5 0V4z" fill="#e8f4ff" />
          <path d="M39 8v4h-4z" fill="#888" />
        </svg>
        <nav className="flex gap-px">
          {menu.map((m) => (
            <button
              key={m}
              className={`flex h-[13px] items-start px-[11px] leading-[11px] ${
                m === "建模" ? "bg-[#5aa6f8] text-white" : "text-[#444]"
              }`}
            >
              {m}
            </button>
          ))}
        </nav>
      </header>
      <Ribbon />
      <ComboBar />
      <main className="flex min-h-0 flex-1">
        <ComponentTree />
        <div className="ml-1 flex w-[403px] shrink-0 flex-col gap-1">
          <SheetPanel />
          <LayerPanel />
        </div>
        <div className="flex w-1 shrink-0 flex-col pt-[353px]">
          <button aria-label="折叠面板" className="h-[95px] w-full bg-[#5f6b77]" />
        </div>
        <div className="min-w-0 flex-1">
          <Drawing />
        </div>
      </main>
    </div>
  );
}
